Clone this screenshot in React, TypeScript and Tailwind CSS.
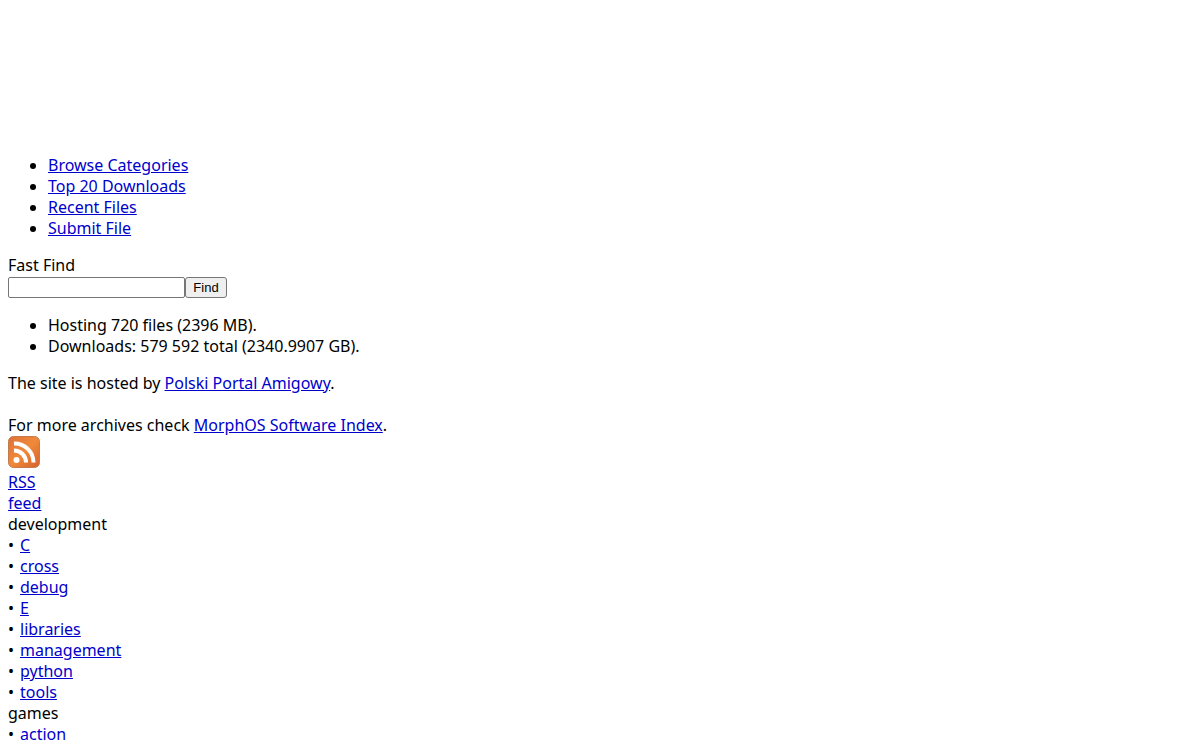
const menu = ["Browse Categories", "Top 20 Downloads", "Recent Files", "Submit File"];

const categories = [
  {
    name: "development",
    items: ["C", "cross", "debug", "E", "libraries", "management", "python", "tools"],
  },
  { name: "games", items: ["action"] },
];

function Link({ children }: { children: string }) {
  return (
    <a href="#" className="text-[#0000cc] underline">
      {children}
    </a>
  );
}

function RssIcon() {
  return (
    <svg width="32" height="32" viewBox="0 0 32 32" aria-hidden="true">
      <defs>
        <linearGradient id="rss" x1="0" y1="0" x2="1" y2="1">
          <stop offset="0" stopColor="#dc7238" />
          <stop offset="0.5" stopColor="#f08a3a" />
          <stop offset="1" stopColor="#d4602c" />
        </linearGradient>
      </defs>
      <rect x="0.5" y="0.5" width="31" height="31" rx="5" fill="url(#rss)" stroke="#c47a4c" />
      <circle cx="8.5" cy="24" r="3" fill="#fff" />
      <path d="M6 14.5a12 12 0 0 1 12 12" fill="none" stroke="#fff" strokeWidth="4" />
      <path d="M6 7.5a19 19 0 0 1 19.5 19" fill="none" stroke="#fff" strokeWidth="4" />
    </svg>
  );
}

export default function App() {
  return (
    <div className="px-2 pt-[155px] font-['Noto_Sans','Open_Sans',sans-serif] text-[16px] leading-[21px] text-black">
      <ul className="mb-4 list-disc pl-10">
        {menu.map((item) => (
          <li key={item}>
            <Link>{item}</Link>
          </li>
        ))}
      </ul>

      <form onSubmit={(e) => e.preventDefault()}>
        <label htmlFor="find" className="block">
          Fast Find
        </label>
        <div className="flex py-px font-['Liberation_Sans',sans-serif] text-[13px] leading-[19px]">
          <input
            id="find"
            type="text"
            className="h-[21px] w-[177px] rounded-[2px] border border-[#767676] bg-white px-1"
          />
          <button
            type="submit"
            className="h-[21px] w-[42px] rounded-[3px] border border-[#767676] bg-[#efefef]"
          >
            Find
          </button>
        </div>
      </form>

      <ul className="my-4 list-disc pl-10">
        <li>Hosting 720 files (2396 MB).</li>
        <li>Downloads: 579 592 total (2340.9907 GB).</li>
      </ul>

      <p className="mb-[21px]">
        The site is hosted by <Link>Polski Portal Amigowy</Link>.
      </p>
      <p>
        For more archives check <Link>MorphOS Software Index</Link>.
      </p>

      <a href="#" className="block w-10 text-[#0000cc] underline">
        <span className="block h-9">
          <RssIcon />
        </span>
        RSS feed
      </a>

      {categories.map((category) => (
        <div key={category.name}>
          <div>{category.name}</div>
          {category.items.map((item) => (
            <div key={item} className="flex">
              <span className="w-3">•</span>
              <Link>{item}</Link>
            </div>
          ))}
        </div>
      ))}
    </div>
  );
}
